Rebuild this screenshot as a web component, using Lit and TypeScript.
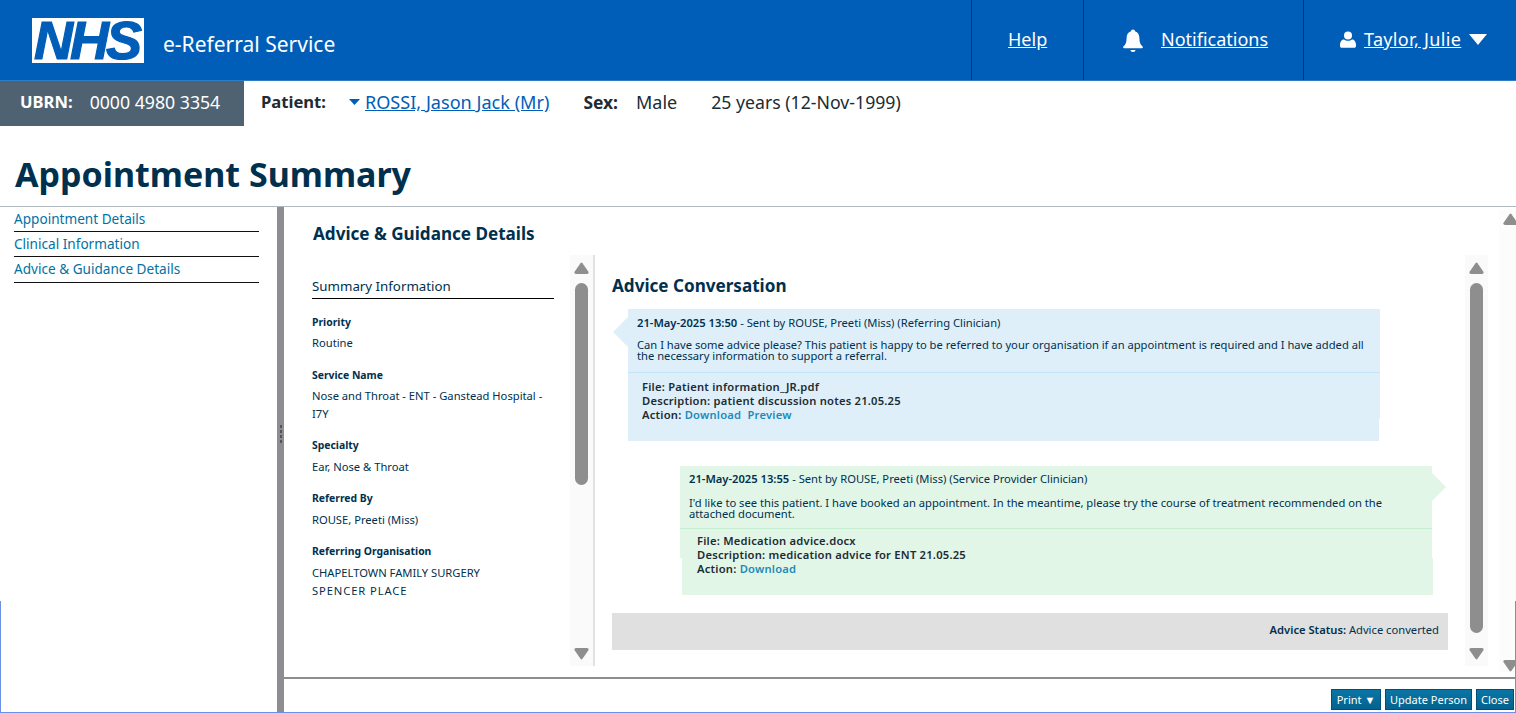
import { LitElement, html, css, svg } from "lit";
import { customElement } from "lit/decorators.js";

const up = svg`<svg class="arr" viewBox="0 0 15 12"><path d="M7.5 0.5 Q8 0.5 8.5 1.2 L14.6 10 Q15 12 13 12 L2 12 Q0 12 0.4 10 L6.5 1.2 Q7 0.5 7.5 0.5Z" fill="#8e8e8e"/></svg>`;
const down = svg`<svg class="arr" viewBox="0 0 15 12"><path d="M7.5 11.5 Q8 11.5 8.5 10.8 L14.6 2 Q15 0 13 0 L2 0 Q0 0 0.4 2 L6.5 10.8 Q7 11.5 7.5 11.5Z" fill="#8e8e8e"/></svg>`;

@customElement("app-root")
export class AppRoot extends LitElement {
  static styles = css`
    :host { display: flex; flex-direction: column; width: 1516px; height: 713px; overflow: hidden; background: #fff; position: relative;
      font-family: "Noto Sans", "Open Sans", sans-serif; color: #00304d; }
    * { box-sizing: border-box; }
    a { color: inherit; }
    .top { height: 81px; flex: none; background: #005eb8; border-bottom: 1px solid #2f7cc6; display: flex; color: #fff; }
    .brand { flex: 1; display: flex; align-items: flex-start; padding: 18px 0 0 32px; }
    .logo { width: 112px; height: 45px; background: #fff; color: #005eb8; font: italic 700 54px/45px "Liberation Sans", sans-serif; letter-spacing: -3px; text-align: center; flex: none; padding-right: 3px; -webkit-text-stroke: 1.2px #005eb8; }
    .svc { font-size: 21px; margin: 12px 0 0 19px; line-height: 28px; }
    .cell { height: 80px; border-left: 1px solid #003087; display: flex; align-items: flex-start; padding-top: 26px; font-size: 18px; line-height: 26px; }
    .cell a { color: #fff; }
    .c1 { width: 112px; padding-left: 36px; }
    .c2 { width: 220px; padding-left: 39px; gap: 18px; }
    .c3 { width: 213px; padding-left: 36px; }
    .c3 a { letter-spacing: 0.33px; }
    .bell { width: 20px; height: 26px; flex: none; margin-top: 2px; }
    .user { width: 16px; height: 17px; margin: 5px 8px 0 0; flex: none; }
    .caret { width: 18px; height: 11px; margin: 8px 0 0 8px; flex: none; }
    .pat { height: 45px; flex: none; display: flex; align-items: center; font-size: 17.7px; color: #212b32; padding-bottom: 4px; }
    .pat b { font-size: 16.6px; }
    .ubrn { width: 244px; height: 45px; background: #4f6272; color: #fff; display: flex; align-items: center; padding: 0 0 4px 20px; gap: 17px; margin-bottom: -4px; }
    b { font-weight: 700; }
    .patl { margin-left: 17px; }
    .tri { width: 11px; height: 6px; margin: 0 5px 0 23px; flex: none; }
    .pat a { color: #005eb8; font-size: 18.1px; }
    .pat .sex { margin-left: 34px; font-size: 17.4px; }
    .male { margin-left: 18px; font-size: 18px; }
    .age { margin-left: 34px; }
    h1 { margin: 0; height: 80px; flex: none; font-size: 34px; line-height: 44px; padding: 26px 0 0 15px; font-weight: 700; color: #00304d; }
    .main { flex: 1; min-height: 0; display: flex; border-top: 1px solid #b0b8c0; }
    nav { width: 277px; flex: none; padding: 0 18px 0 14px; }
    nav a { display: block; height: 25px; line-height: 23px; font-size: 13.6px; color: #0072a3; text-decoration: none; border-bottom: 1px solid #111; }
    nav a:last-child { height: 26px; }
    .split { width: 7px; flex: none; background: #8e8e92; display: flex; flex-direction: column; align-items: center; padding-top: 218px; gap: 2px; }
    .split i { width: 2px; height: 3px; background: #555; display: block; }
    .pane { flex: 1; min-width: 0; display: flex; flex-direction: column; position: relative; }
    .body { height: 470px; flex: none; display: flex; flex-direction: column; padding-left: 28px; }
    h2 { margin: 0; height: 48px; flex: none; font-size: 17.1px; line-height: 24px; padding: 15px 0 0 1px; font-weight: 700; }
    .panels { height: 411px; flex: none; display: flex; }
    .sum { width: 258px; flex: none; overflow: hidden; font-size: 11.2px; line-height: 18px; }
    .sum h3 { margin: 19px 0 14px; width: 242px; height: 25px; border-bottom: 1px solid #000; font-weight: 400; font-size: 13.3px; line-height: 24px; }
    .sum .l { font-weight: 700; font-size: 10.4px; margin-bottom: 3px; }
    .sum .s { margin: -1px 0 4px; }
    .sum .v { margin-bottom: 14px; width: 242px; }
    .wide { letter-spacing: 0.9px; }
    .bar { width: 23px; height: 411px; flex: none; background: #fafafa; position: relative; display: flex; flex-direction: column; align-items: center; justify-content: space-between; padding: 7px 0 6px; }
    .arr { width: 15px; height: 12px; display: block; }
    .thumb { position: absolute; left: 5px; top: 28px; width: 13px; background: #8e8e8e; border-radius: 7px; }
    .t1 { height: 202px; }
    .t2 { height: 350px; }
    .divi { width: 2px; height: 411px; background: #e2e2e2; flex: none; }
    .conv { width: 870px; flex: none; padding-left: 17px; }
    .conv h2 { height: 54px; padding: 19px 0 0 0; }
    .bub { position: relative; font-size: 11.2px; color: #00304d; padding: 7px 0 0 9px; }
    .b1 { margin-left: 16px; width: 752px; height: 132px; background: linear-gradient(#deeffa,#deeffa) 0 0/752px 110px no-repeat, linear-gradient(#deeffa,#deeffa) 0 110px/751px 22px no-repeat; }
    .b2 { margin: 25px 0 0 68px; width: 754px; height: 129px; padding-top: 6px; background: linear-gradient(#e2f6e8,#e2f6e8) 0 0/752px 92px no-repeat, linear-gradient(#e2f6e8,#e2f6e8) 2px 92px/751px 37px no-repeat; }
    .b1::before { content: ""; position: absolute; left: -15px; top: 8px; border: 15px solid transparent; border-left: 0; border-right-color: #deeffa; }
    .b2::before { content: ""; position: absolute; left: 752px; top: 7px; border: 14px solid transparent; border-right: 0; border-left-color: #e2f6e8; }
    .hd { line-height: 14px; }
    .hd b { font-weight: 600; }
    .msg { margin: 9px 0 0; line-height: 11px; width: 742px; height: 22px; }
    .b2 .msg { margin-top: 11px; }
    .sep { margin: 11px 0 0 -9px; height: 1px; width: 752px; }
    .b2 .sep { margin-top: 9px; }
    .b1 .sep { background: #c3e3f7; }
    .b2 .sep { background: #c8eed2; }
    .att { padding: 6.5px 0 0 5px; line-height: 14.3px; font-weight: 600; color: #1d2b33; letter-spacing: 0.22px; }
    .b2 .att { padding: 4.5px 0 0 8px; }
    .att a { color: #1f8ab8; text-decoration: none; margin-right: 3px; }
    .status { margin-top: 18px; height: 37px; width: 836px; background: #e0e0e0; text-align: right; font-size: 11.2px; line-height: 34px; padding-right: 9px; }
    .status b { font-weight: 600; }
    .foot { flex: 1; border-top: 2px solid #8e8e92; display: flex; justify-content: flex-end; align-items: flex-start; gap: 4px; padding: 10px 2px 0 0; }
    .btn { height: 21px; border: 1px solid #004f75; background: linear-gradient(#0a76a6, #04628f); color: #fff; font-size: 11px; line-height: 19px; padding: 0; text-align: center; font-family: inherit; }
    .p { width: 50px; } .u { width: 87px; } .x { width: 38px; }
    .outer { position: absolute; right: 0; top: 3px; width: 17px; background: #fcfcfc; display: flex; flex-direction: column; justify-content: space-between; padding: 3px 0 0 4px; overflow: hidden; height: 462px; }
    .outer .arr { width: 15px; flex: none; }
    .edge { position: absolute; left: 0; right: 0; top: 601px; bottom: 0; border: 1px solid #6d8fe8; border-top: 0; pointer-events: none; }
  `;
  render() {
    return html`
      <header class="top">
        <div class="brand"><div class="logo">NHS</div><div class="svc">e-Referral Service</div></div>
        <div class="cell c1"><a href="#">Help</a></div>
        <div class="cell c2">
          <svg class="bell" viewBox="0 0 20 26"><path d="M10 1.5c1.2 0 2 .8 2 1.7 3 .8 4.4 3.4 4.4 6.8 0 4.4 1 6.7 3.2 8.6.6.6.3 1.6-.6 1.6H1c-.9 0-1.2-1-.6-1.6C2.600 16.700 3.600 14.400 3.600 10c0-3.400 1.400-6 4.400-6.800 0-.9.8-1.700 2-1.700z" fill="#fff"/><path d="M7.500 22h5c0 1.200-1.100 1.900-2.500 1.900S7.500 23.200 7.500 22z" fill="#fff"/></svg>
          <a href="#">Notifications</a>
        </div>
        <div class="cell c3">
          <svg class="user" viewBox="0 0 16 17"><circle cx="8" cy="4.500" r="4" fill="#fff"/><path d="M0 14c0-3.500 2-5.500 4-5.500 1 .8 2.500 1.300 4 1.300s3-.5 4-1.300c2 0 4 2 4 5.500v1c0 1-.8 1.800-1.800 1.800H1.800C.8 16.800 0 16 0 15z" fill="#fff"/></svg>
          <a href="#">Taylor, Julie</a>
          <svg class="caret" viewBox="0 0 18 11"><path d="M0 0H18L9 11Z" fill="#fff"/></svg>
        </div>
      </header>
      <div class="pat">
        <div class="ubrn"><b>UBRN:</b><span>0000 4980 3354</span></div>
        <b class="patl">Patient:</b>
        <svg class="tri" viewBox="0 0 11 6"><path d="M0 0H11L5.500 6Z" fill="#005eb8"/></svg>
        <a href="#">ROSSI, Jason Jack (Mr)</a>
        <b class="sex">Sex:</b><span class="male">Male</span>
        <span class="age">25 years (12-Nov-1999)</span>
      </div>
      <h1>Appointment Summary</h1>
      <div class="main">
        <nav>
          <a href="#">Appointment Details</a>
          <a href="#">Clinical Information</a>
          <a href="#">Advice &amp; Guidance Details</a>
        </nav>
        <div class="split"><i></i><i></i><i></i><i></i></div>
        <div class="pane">
          <div class="body">
            <h2>Advice &amp; Guidance Details</h2>
            <div class="panels">
              <div class="sum">
                <h3>Summary Information</h3>
                <div class="l">Priority</div><div class="v">Routine</div>
                <div class="l">Service Name</div><div class="v">Nose and Throat - ENT - Ganstead Hospital - I7Y</div>
                <div class="l s">Specialty</div><div class="v">Ear, Nose &amp; Throat</div>
                <div class="l s">Referred By</div><div class="v">ROUSE, Preeti (Miss)</div>
                <div class="l s">Referring Organisation</div><div class="v">CHAPELTOWN FAMILY SURGERY<br /><span class="wide">SPENCER PLACE</span></div>
              </div>
              <div class="bar">${up}<div class="thumb t1"></div>${down}</div>
              <div class="divi"></div>
              <div class="conv">
                <h2>Advice Conversation</h2>
                <div class="bub b1">
                  <div class="hd"><b>21-May-2025 13:50</b> - Sent by ROUSE, Preeti (Miss) (Referring Clinician)</div>
                  <p class="msg">Can I have some advice please? This patient is happy to be referred to your organisation if an appointment is required and I have added all the necessary information to support a referral.</p>
                  <div class="sep"></div>
                  <div class="att">File: Patient information_JR.pdf<br />Description: patient discussion notes 21.05.25<br />Action: <a href="#">Download</a> <a href="#">Preview</a></div>
                </div>
                <div class="bub b2">
                  <div class="hd"><b>21-May-2025 13:55</b> - Sent by ROUSE, Preeti (Miss) (Service Provider Clinician)</div>
                  <p class="msg">I'd like to see this patient. I have booked an appointment. In the meantime, please try the course of treatment recommended on the attached document.</p>
                  <div class="sep"></div>
                  <div class="att">File: Medication advice.docx<br />Description: medication advice for ENT 21.05.25<br />Action: <a href="#">Download</a></div>
                </div>
                <div class="status"><b>Advice Status:</b> Advice converted</div>
              </div>
              <div class="bar">${up}<div class="thumb t2"></div>${down}</div>
            </div>
          </div>
          <div class="foot">
            <button class="btn p">Print ▼</button>
            <button class="btn u">Update Person</button>
            <button class="btn x">Close</button>
          </div>
          <div class="outer">${up}${down}</div>
        </div>
      </div>
      <div class="edge"></div>
    `;
  }
}
